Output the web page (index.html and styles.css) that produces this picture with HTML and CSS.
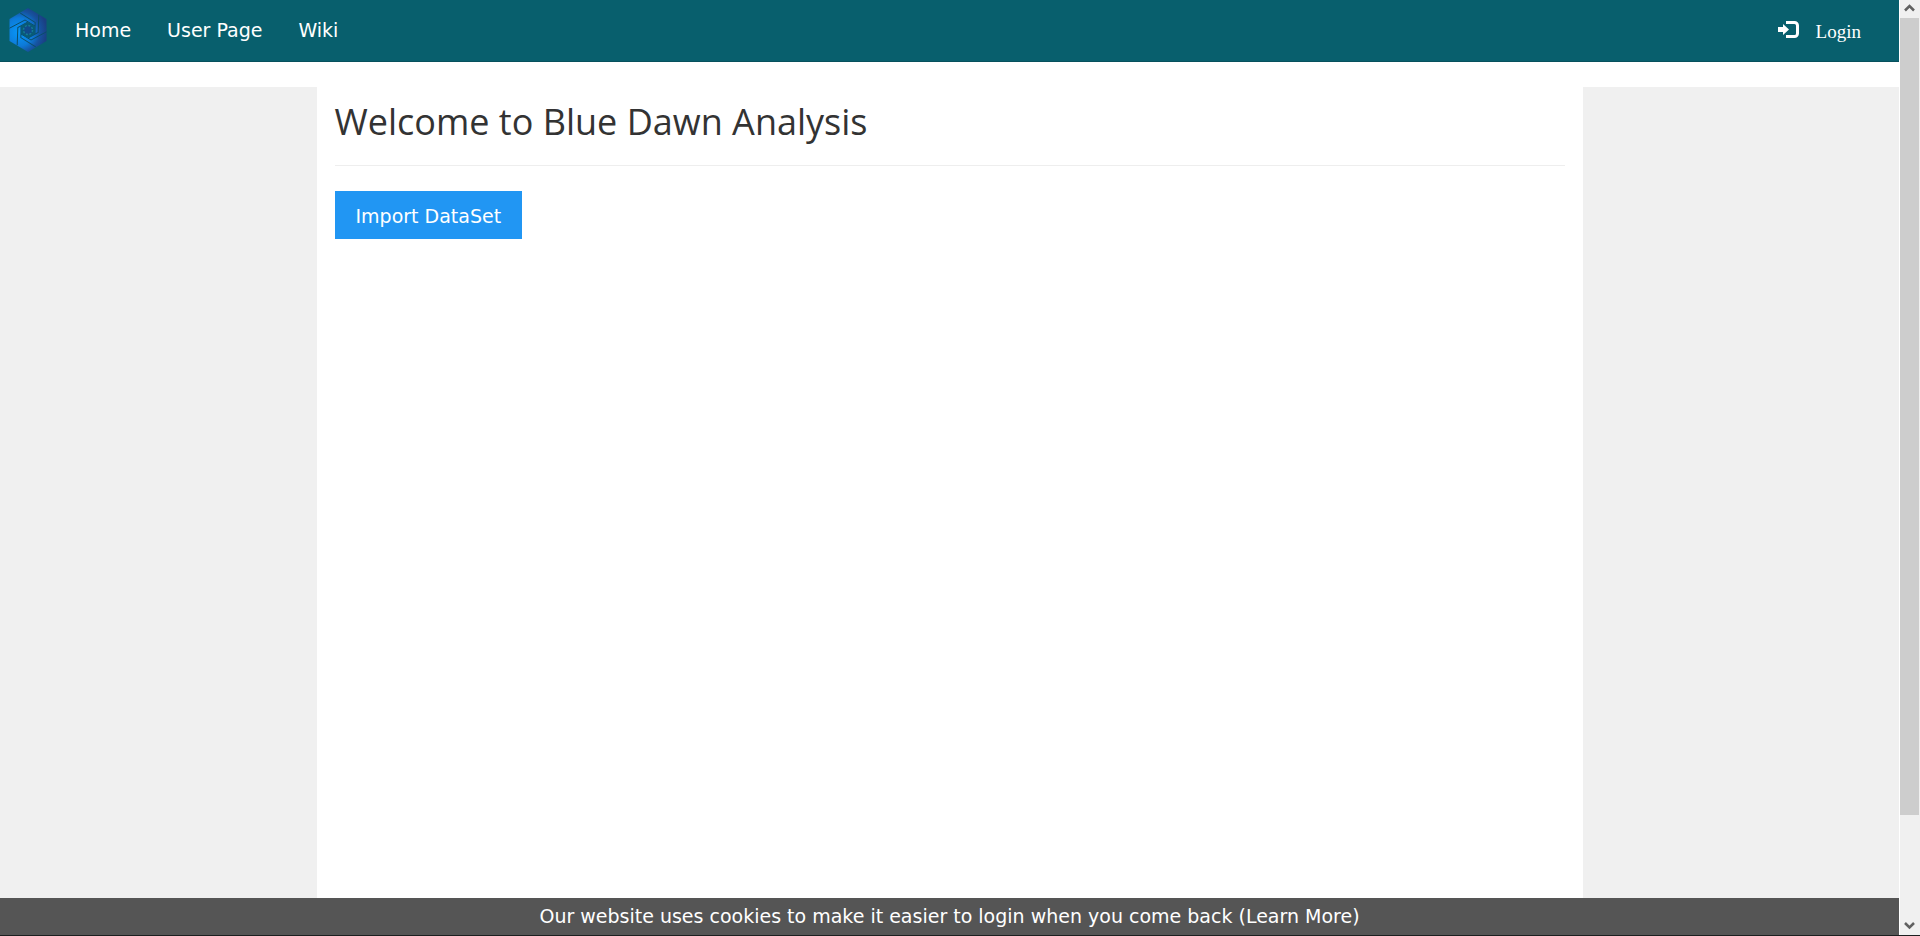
FILE: index.html
```html
<!DOCTYPE html>
<html lang="en">
<head>
<meta charset="utf-8">
<title>Blue Dawn Analysis</title>
<link rel="stylesheet" href="styles.css">
</head>
<body>
<div class="window">
  <div class="page">
    <nav class="navbar">
      <a class="brand" href="#" aria-label="Blue Dawn">
        <svg class="logo" viewBox="-19 -22 38 44" aria-hidden="true">
          <defs>
            <radialGradient id="glow" gradientUnits="userSpaceOnUse" cx="-9" cy="2" r="28">
              <stop offset="0" stop-color="#0798fa"/>
              <stop offset=".5" stop-color="#0d7ad8"/>
              <stop offset=".75" stop-color="#1653a0"/>
              <stop offset="1" stop-color="#1a3f82"/>
            </radialGradient>
            <path id="seam" d="M7 -4 L-3 -10 L-18.500 -1.800"/>
          </defs>
          <path d="M0 -22 L18.500 -11 V11 L0 22 L-18.500 11 V-11Z" fill="url(#glow)"/>
          <g fill="none" stroke="#0b4d68" stroke-width="1">
            <use href="#seam"/>
            <use href="#seam" transform="rotate(60)"/>
            <use href="#seam" transform="rotate(120)"/>
            <use href="#seam" transform="rotate(180)"/>
            <use href="#seam" transform="rotate(240)"/>
            <use href="#seam" transform="rotate(300)"/>
          </g>
          <path d="M0 -8 L7 -4 V4 L0 8 L-7 4 V-4Z" fill="#095a75"/>
          <circle r="4.500" fill="#104a8b" stroke="#157a96" stroke-width="1.500" stroke-dasharray="2 1.500"/>
        </svg>
      </a>
      <a class="nav-link" href="#">Home</a>
      <a class="nav-link" href="#">User Page</a>
      <a class="nav-link" href="#">Wiki</a>
      <a class="login" href="#">
        <svg class="login-icon" viewBox="0 0 21 17" aria-hidden="true">
          <path d="M0 6h5V3l6 5.500L5 14v-3H0z" fill="#fff"/>
          <path d="M8 1.500h8.500a3 3 0 0 1 3 3v8a3 3 0 0 1-3 3H8" fill="none" stroke="#fff" stroke-width="3"/>
        </svg>
        <span>Login</span>
      </a>
    </nav>
    <div class="columns">
      <aside class="side"></aside>
      <main class="content">
        <h1 class="title">Welcome to Blue Dawn Analysis</h1>
        <hr class="rule">
        <button class="import" type="button">Import DataSet</button>
      </main>
      <aside class="side"></aside>
    </div>
    <footer class="cookies">Our website uses cookies to make it easier to login when you come back (<a class="learn" href="#">Learn More</a>)</footer>
  </div>
  <div class="scrollbar" aria-hidden="true">
    <svg class="arrow" viewBox="0 0 20 18"><path d="M5 10.500 L9.500 6 L14 10.500" fill="none" stroke="#606060" stroke-width="2.500"/></svg>
    <div class="track"><div class="thumb"></div></div>
    <svg class="arrow" viewBox="0 0 20 18"><path d="M5 6 L9.500 10.500 L14 6" fill="none" stroke="#606060" stroke-width="2.500"/></svg>
  </div>
</div>
</body>
</html>
```
FILE: styles.css
```css
* { box-sizing: border-box; }
body {
  margin: 0;
  background: #fff;
  font: 19px/27px Verdana, "DejaVu Sans", sans-serif;
  color: #333;
}
.window {
  display: flex;
  gap: 1px;
  height: 100vh;
  border-bottom: 1px solid #1c1f20;
}
.page {
  flex: 1;
  display: flex;
  flex-direction: column;
}
.navbar {
  display: flex;
  align-items: center;
  height: 62px;
  padding: 0 38px 2px 9px;
  background: #085f6d;
  border-bottom: 1px solid #07505d;
}
.brand { display: flex; margin-right: 10px; }
.logo { width: 38px; height: 44px; }
.nav-link {
  padding: 2px 18px 0;
  color: #fff;
  text-decoration: none;
}
.login {
  display: flex;
  align-items: center;
  gap: 17px;
  margin-left: auto;
  color: #fff;
  font: 19px/27px "Liberation Serif", serif;
  text-decoration: none;
}
.login span { padding-top: 4px; }
.login-icon { width: 21px; height: 17px; }
.columns {
  flex: 1;
  display: grid;
  grid-template-columns: 1fr 4fr 1fr;
  margin-top: 25px;
}
.side { background: #f0f0f0; }
.content { padding: 10px 18px; }
.title {
  margin: 0;
  font: 36px/50px "Open Sans", sans-serif;
}
.rule {
  margin: 18px 0 25px;
  border: 0;
  border-top: 1px solid #eee;
}
.import {
  height: 48px;
  padding: 2px 21px 0;
  border: 0;
  background: #2196f3;
  color: #fff;
  font: inherit;
}
.cookies {
  padding: 5px 0;
  background: #555;
  color: #fff;
  text-align: center;
}
.learn { color: inherit; text-decoration: none; }
.scrollbar {
  display: flex;
  flex-direction: column;
  width: 20px;
  background: #f0f0f0;
}
.arrow { width: 20px; height: 18px; }
.track { flex: 1; }
.thumb {
  height: 88.6%;
  margin-right: 1px;
  background: #cdcdcd;
}
```
